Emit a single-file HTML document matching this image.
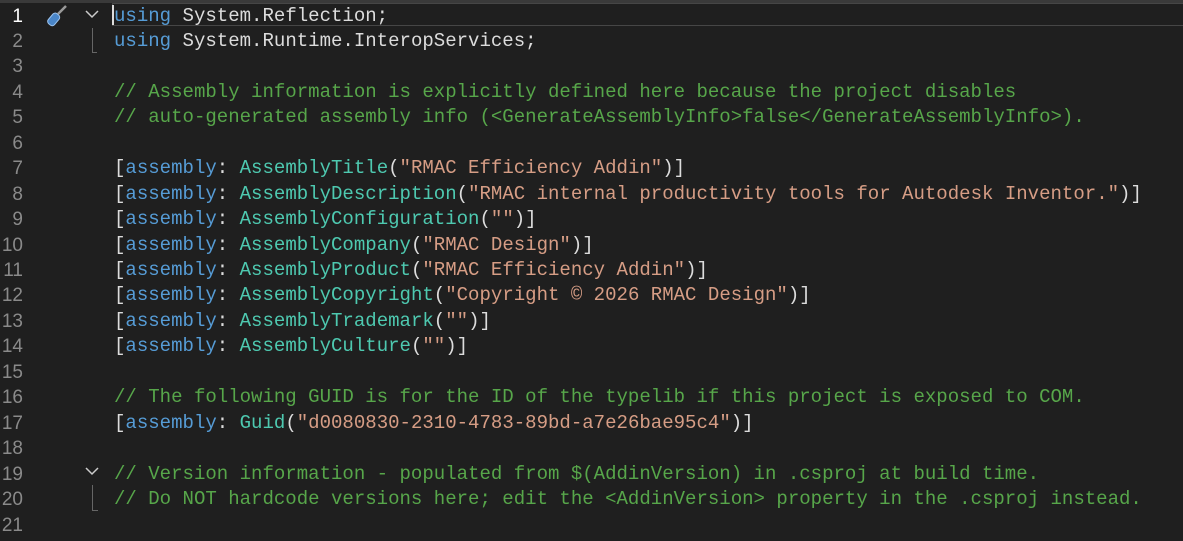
<!DOCTYPE html>
<html><head><style>
body{margin:0;background:#1f1f1f;width:1183px;height:541px;overflow:hidden;position:relative;font-family:"Liberation Mono",monospace;}
.top{position:absolute;left:0;top:0;width:1183px;height:3px;background:#3a3a3a}
.ln{position:absolute;left:0;width:23px;text-align:right;color:#8a8a8a;font-family:"Liberation Sans",sans-serif;font-size:19px;}
.code{position:absolute;left:114px;white-space:pre;font-size:19.05px;color:#dcdcdc;}
.k{color:#569cd6}.t{color:#4ec9b0}.s{color:#d69d85}.c{color:#57a64a}
.cur{position:absolute;left:112px;top:3px;width:1071px;height:23px;border:1px solid #464646;border-right:none;box-sizing:border-box}
</style></head><body>
<div class="top"></div>
<div class="cur"></div>
<div style="position:absolute;left:112px;top:5px;width:2px;height:20px;background:#ddd"></div>
<svg style="position:absolute;left:44px;top:2px" width="28" height="26"><rect x="6" y="11" width="8" height="13" rx="3" transform="rotate(40 10 17)" fill="#4a86c8" stroke="#9cc3ee" stroke-width="1"/><line x1="14" y1="12" x2="22" y2="4" stroke="#999" stroke-width="2.5"/></svg>
<svg style="position:absolute;left:84px;top:8px" width="16" height="12"><polyline points="2,3 8,9 14,3" stroke="#ccc" stroke-width="1.5" fill="none"/></svg>
<div style="position:absolute;left:92px;top:28px;width:1px;height:25px;background:#666"></div>
<div style="position:absolute;left:92px;top:52px;width:5px;height:1px;background:#666"></div>
<svg style="position:absolute;left:84px;top:465px" width="16" height="12"><polyline points="2,3 8,9 14,3" stroke="#ccc" stroke-width="1.5" fill="none"/></svg>
<div style="position:absolute;left:92px;top:485px;width:1px;height:25px;background:#666"></div>
<div style="position:absolute;left:92px;top:510px;width:6px;height:1px;background:#666"></div>
<div id="nums"></div>
<div id="lines"></div>
<script>
var L=[
'<span class="k">using</span> System.Reflection;',
'<span class="k">using</span> System.Runtime.InteropServices;',
'',
'<span class="c">// Assembly information is explicitly defined here because the project disables</span>',
'<span class="c">// auto-generated assembly info (&lt;GenerateAssemblyInfo&gt;false&lt;/GenerateAssemblyInfo&gt;).</span>',
'',
'[<span class="k">assembly</span>: <span class="t">AssemblyTitle</span>(<span class="s">"RMAC Efficiency Addin"</span>)]',
'[<span class="k">assembly</span>: <span class="t">AssemblyDescription</span>(<span class="s">"RMAC internal productivity tools for Autodesk Inventor."</span>)]',
'[<span class="k">assembly</span>: <span class="t">AssemblyConfiguration</span>(<span class="s">""</span>)]',
'[<span class="k">assembly</span>: <span class="t">AssemblyCompany</span>(<span class="s">"RMAC Design"</span>)]',
'[<span class="k">assembly</span>: <span class="t">AssemblyProduct</span>(<span class="s">"RMAC Efficiency Addin"</span>)]',
'[<span class="k">assembly</span>: <span class="t">AssemblyCopyright</span>(<span class="s">"Copyright © 2026 RMAC Design"</span>)]',
'[<span class="k">assembly</span>: <span class="t">AssemblyTrademark</span>(<span class="s">""</span>)]',
'[<span class="k">assembly</span>: <span class="t">AssemblyCulture</span>(<span class="s">""</span>)]',
'',
'<span class="c">// The following GUID is for the ID of the typelib if this project is exposed to COM.</span>',
'[<span class="k">assembly</span>: <span class="t">Guid</span>(<span class="s">"d0080830-2310-4783-89bd-a7e26bae95c4"</span>)]',
'',
'<span class="c">// Version information - populated from $(AddinVersion) in .csproj at build time.</span>',
'<span class="c">// Do NOT hardcode versions here; edit the &lt;AddinVersion&gt; property in the .csproj instead.</span>',
''];
var h='',n='';
for(var i=0;i<21;i++){var y=2.5+i*25.45;
h+='<div class="code" style="top:'+(y+1)+'px;line-height:25px">'+L[i]+'</div>';
n+='<div class="ln" style="top:'+(y+1)+'px;line-height:25px;'+(i==0?'color:#fff':'')+'">'+(i+1)+'</div>';}
document.getElementById('lines').innerHTML=h;document.getElementById('nums').innerHTML=n;
</script>
</body></html>
